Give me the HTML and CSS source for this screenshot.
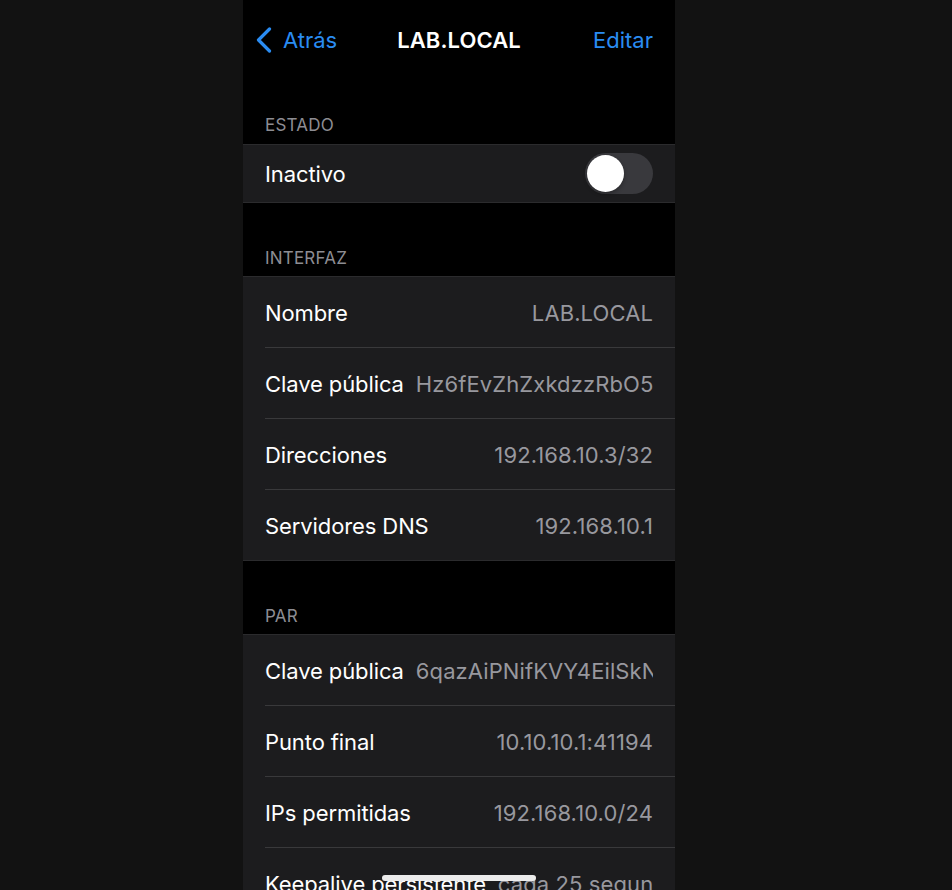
FILE: index.html
```html
<!DOCTYPE html>
<html lang="es">
<head>
<meta charset="utf-8">
<title>LAB.LOCAL</title>
<link rel="stylesheet" href="styles.css">
</head>
<body>
<div class="phone">
  <header class="navbar">
    <div class="nav-left">
      <svg class="chevron" width="16" height="26" viewBox="0 0 16 26" aria-hidden="true">
        <polyline points="13.5,2 2.5,13 13.5,24" fill="none" stroke="currentColor" stroke-width="3.2" stroke-linecap="round" stroke-linejoin="round"/>
      </svg>
      <span>Atrás</span>
    </div>
    <div class="nav-title">LAB.LOCAL</div>
    <div class="nav-right">Editar</div>
  </header>

  <section class="section first">
    <div class="section-header">ESTADO</div>
    <div class="group">
      <div class="row short">
        <span class="label">Inactivo</span>
        <span class="toggle"><span class="knob"></span></span>
      </div>
    </div>
  </section>

  <section class="section">
    <div class="section-header">INTERFAZ</div>
    <div class="group">
      <div class="row"><span class="label">Nombre</span><span class="value">LAB.LOCAL</span></div>
      <div class="row"><span class="label">Clave pública</span><span class="value">Hz6fEvZhZxkdzzRbO5cQmW1tL0yPv8sKd2JrN4=</span></div>
      <div class="row"><span class="label">Direcciones</span><span class="value">192.168.10.3/32</span></div>
      <div class="row"><span class="label">Servidores DNS</span><span class="value">192.168.10.1</span></div>
    </div>
  </section>

  <section class="section">
    <div class="section-header">PAR</div>
    <div class="group">
      <div class="row"><span class="label">Clave pública</span><span class="value">6qazAiPNifKVY4EilSkNS8wTqLm3Zx0aHbYc=</span></div>
      <div class="row"><span class="label">Punto final</span><span class="value">10.10.10.1:41194</span></div>
      <div class="row"><span class="label">IPs permitidas</span><span class="value">192.168.10.0/24</span></div>
      <div class="row"><span class="label">Keepalive persistente</span><span class="value">cada 25 segundos</span></div>
    </div>
  </section>

  <div class="home-indicator"></div>
</div>
</body>
</html>
```

FILE: styles.css
```css
* { box-sizing: border-box; }

html, body {
  margin: 0;
  padding: 0;
  height: 890px;
  overflow: hidden;
  background: #121212;
}

body {
  font-family: Inter, "Noto Sans", "Liberation Sans", sans-serif;
  -webkit-font-smoothing: antialiased;
}

.phone {
  position: relative;
  width: 432px;
  height: 890px;
  margin-left: 243px;
  background: #000;
  overflow: hidden;
  color: #fff;
}

.navbar {
  height: 80px;
  display: grid;
  grid-template-columns: 1fr auto 1fr;
  align-items: center;
  padding: 0 22px;
  font-size: 22px;
}

.nav-left {
  display: flex;
  align-items: center;
  gap: 11px;
  margin-left: -9px;
  color: #2a8cf2;
}

.chevron { display: block; }

.nav-title {
  font-weight: 600;
  letter-spacing: 0.1px;
}

.nav-right {
  justify-self: end;
  color: #2a8cf2;
}

.section { margin-top: 45px; }
.section.first { margin-top: 35px; }
.section.first .section-header { padding-bottom: 9px; }

.section-header {
  padding: 0 22px 8px;
  line-height: 20px;
  font-size: 17px;
  color: #8d8d93;
  letter-spacing: 0.2px;
}

.group {
  background: #1c1c1e;
  border-top: 1px solid #2b2b2d;
  border-bottom: 1px solid #2b2b2d;
  padding-left: 22px;
}

.row {
  display: flex;
  align-items: center;
  gap: 12px;
  height: 71px;
  padding-top: 2px;
  padding-right: 22px;
  border-bottom: 1px solid #39393b;
  font-size: 22px;
  letter-spacing: -0.1px;
  white-space: nowrap;
}

.row:last-child { border-bottom: none; height: 70px; }

.row.short { height: 57px; padding-top: 0; }

.label {
  flex: none;
  color: #fff;
}

.value {
  flex: 1;
  min-width: 0;
  overflow: hidden;
  text-align: right;
  color: #98989e;
  letter-spacing: 0.1px;
}

.toggle {
  margin-left: auto;
  width: 68px;
  height: 41px;
  border-radius: 21px;
  background: #39393d;
  padding: 2px;
  display: flex;
  align-items: center;
}

.knob {
  width: 37px;
  height: 37px;
  border-radius: 50%;
  background: #fff;
  box-shadow: 0 2px 4px rgba(0,0,0,0.3);
}

.home-indicator {
  position: absolute;
  left: 139px;
  top: 875px;
  width: 154px;
  height: 6px;
  border-radius: 3px;
  background: #ececec;
}
```
